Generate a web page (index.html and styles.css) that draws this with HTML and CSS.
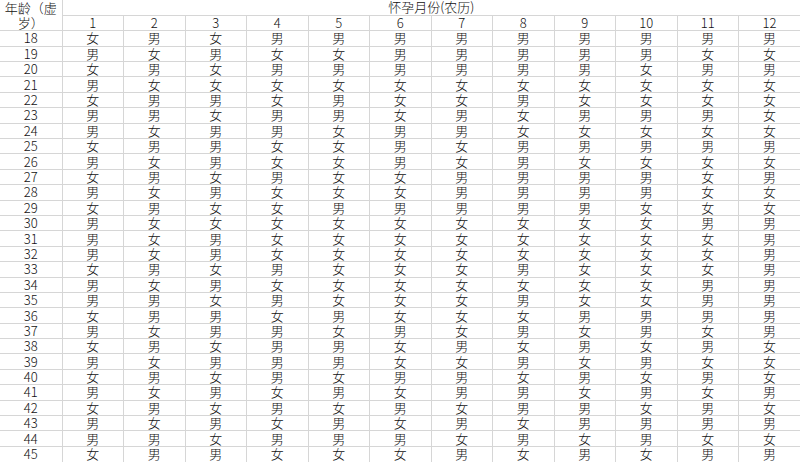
FILE: index.html
```html
<!DOCTYPE html>
<html lang="zh-CN">
<head>
<meta charset="utf-8">
<title>生男生女表</title>
<link rel="stylesheet" href="styles.css">
</head>
<body>
<table class="chart">
<colgroup><col class="c-age"><col span="12" class="c-m"></colgroup>
<thead>
<tr><th class="age-head" rowspan="2">年龄（虚岁）</th><th class="month-head" colspan="12">怀孕月份(农历)</th></tr>
<tr><th>1</th><th>2</th><th>3</th><th>4</th><th>5</th><th>6</th><th>7</th><th>8</th><th>9</th><th>10</th><th>11</th><th>12</th></tr>
</thead>
<tbody>
<tr><th>18</th><td>女</td><td>男</td><td>女</td><td>男</td><td>男</td><td>男</td><td>男</td><td>男</td><td>男</td><td>男</td><td>男</td><td>男</td></tr>
<tr><th>19</th><td>男</td><td>女</td><td>男</td><td>女</td><td>女</td><td>男</td><td>男</td><td>男</td><td>男</td><td>男</td><td>女</td><td>女</td></tr>
<tr><th>20</th><td>女</td><td>男</td><td>女</td><td>男</td><td>男</td><td>男</td><td>男</td><td>男</td><td>男</td><td>女</td><td>男</td><td>男</td></tr>
<tr><th>21</th><td>男</td><td>女</td><td>女</td><td>女</td><td>女</td><td>女</td><td>女</td><td>女</td><td>女</td><td>女</td><td>女</td><td>女</td></tr>
<tr><th>22</th><td>女</td><td>男</td><td>男</td><td>女</td><td>男</td><td>女</td><td>女</td><td>男</td><td>女</td><td>女</td><td>女</td><td>女</td></tr>
<tr><th>23</th><td>男</td><td>男</td><td>女</td><td>男</td><td>男</td><td>女</td><td>男</td><td>女</td><td>男</td><td>男</td><td>男</td><td>女</td></tr>
<tr><th>24</th><td>男</td><td>女</td><td>男</td><td>男</td><td>女</td><td>男</td><td>男</td><td>女</td><td>女</td><td>女</td><td>女</td><td>女</td></tr>
<tr><th>25</th><td>女</td><td>男</td><td>男</td><td>女</td><td>女</td><td>男</td><td>女</td><td>男</td><td>男</td><td>男</td><td>男</td><td>男</td></tr>
<tr><th>26</th><td>男</td><td>女</td><td>男</td><td>女</td><td>女</td><td>男</td><td>女</td><td>男</td><td>女</td><td>女</td><td>女</td><td>女</td></tr>
<tr><th>27</th><td>女</td><td>男</td><td>女</td><td>男</td><td>女</td><td>女</td><td>男</td><td>男</td><td>男</td><td>男</td><td>女</td><td>男</td></tr>
<tr><th>28</th><td>男</td><td>女</td><td>男</td><td>女</td><td>女</td><td>女</td><td>男</td><td>男</td><td>男</td><td>男</td><td>女</td><td>女</td></tr>
<tr><th>29</th><td>女</td><td>男</td><td>女</td><td>女</td><td>男</td><td>男</td><td>男</td><td>男</td><td>男</td><td>女</td><td>女</td><td>女</td></tr>
<tr><th>30</th><td>男</td><td>女</td><td>女</td><td>女</td><td>女</td><td>女</td><td>女</td><td>女</td><td>女</td><td>女</td><td>男</td><td>男</td></tr>
<tr><th>31</th><td>男</td><td>女</td><td>男</td><td>女</td><td>女</td><td>女</td><td>女</td><td>女</td><td>女</td><td>女</td><td>女</td><td>男</td></tr>
<tr><th>32</th><td>男</td><td>女</td><td>男</td><td>女</td><td>女</td><td>女</td><td>女</td><td>女</td><td>女</td><td>女</td><td>女</td><td>男</td></tr>
<tr><th>33</th><td>女</td><td>男</td><td>女</td><td>男</td><td>女</td><td>女</td><td>女</td><td>男</td><td>女</td><td>女</td><td>女</td><td>男</td></tr>
<tr><th>34</th><td>男</td><td>女</td><td>男</td><td>女</td><td>女</td><td>女</td><td>女</td><td>女</td><td>女</td><td>女</td><td>男</td><td>男</td></tr>
<tr><th>35</th><td>男</td><td>男</td><td>女</td><td>男</td><td>女</td><td>女</td><td>女</td><td>男</td><td>女</td><td>女</td><td>男</td><td>男</td></tr>
<tr><th>36</th><td>女</td><td>男</td><td>男</td><td>女</td><td>男</td><td>女</td><td>女</td><td>女</td><td>男</td><td>男</td><td>男</td><td>男</td></tr>
<tr><th>37</th><td>男</td><td>女</td><td>男</td><td>男</td><td>女</td><td>男</td><td>女</td><td>男</td><td>女</td><td>男</td><td>女</td><td>男</td></tr>
<tr><th>38</th><td>女</td><td>男</td><td>女</td><td>男</td><td>男</td><td>女</td><td>男</td><td>女</td><td>男</td><td>女</td><td>男</td><td>女</td></tr>
<tr><th>39</th><td>男</td><td>女</td><td>男</td><td>男</td><td>男</td><td>女</td><td>女</td><td>男</td><td>女</td><td>男</td><td>女</td><td>女</td></tr>
<tr><th>40</th><td>女</td><td>男</td><td>女</td><td>男</td><td>女</td><td>男</td><td>男</td><td>女</td><td>男</td><td>女</td><td>男</td><td>女</td></tr>
<tr><th>41</th><td>男</td><td>女</td><td>男</td><td>女</td><td>男</td><td>女</td><td>男</td><td>男</td><td>女</td><td>男</td><td>女</td><td>男</td></tr>
<tr><th>42</th><td>女</td><td>男</td><td>女</td><td>男</td><td>女</td><td>男</td><td>女</td><td>男</td><td>男</td><td>女</td><td>男</td><td>女</td></tr>
<tr><th>43</th><td>男</td><td>女</td><td>男</td><td>女</td><td>男</td><td>女</td><td>男</td><td>女</td><td>男</td><td>男</td><td>男</td><td>男</td></tr>
<tr><th>44</th><td>男</td><td>男</td><td>女</td><td>男</td><td>男</td><td>男</td><td>女</td><td>男</td><td>女</td><td>男</td><td>女</td><td>女</td></tr>
<tr><th>45</th><td>女</td><td>男</td><td>男</td><td>女</td><td>女</td><td>女</td><td>男</td><td>女</td><td>男</td><td>女</td><td>男</td><td>男</td></tr>
</tbody>
</table>
</body>
</html>
```

FILE: styles.css
```css
html, body {
  margin: 0;
  padding: 0;
  background: #ffffff;
}

.chart {
  width: 800px;
  height: 462px;
  table-layout: fixed;
  border-collapse: collapse;
  font-family: "Noto Sans CJK SC", "Noto Sans", sans-serif;
  font-size: 13px;
  font-weight: 300;
  color: #111111;
}

.c-age {
  width: 62px;
}

.chart tr {
  height: 15.4px;
}

.chart th,
.chart td {
  padding: 0;
  font-weight: 300;
  text-align: center;
  vertical-align: middle;
  line-height: 14px;
  border-right: 1px solid #d6d6d6;
  border-bottom: 1px solid #d6d6d6;
  white-space: nowrap;
}

.chart tr > :last-child {
  border-right: none;
}

.chart tbody tr:last-child > * {
  border-bottom: none;
}

.chart .age-head {
  white-space: normal;
  line-height: 15px;
  padding: 0 1px;
}

.chart .month-head {
  border-right: none;
}
```
